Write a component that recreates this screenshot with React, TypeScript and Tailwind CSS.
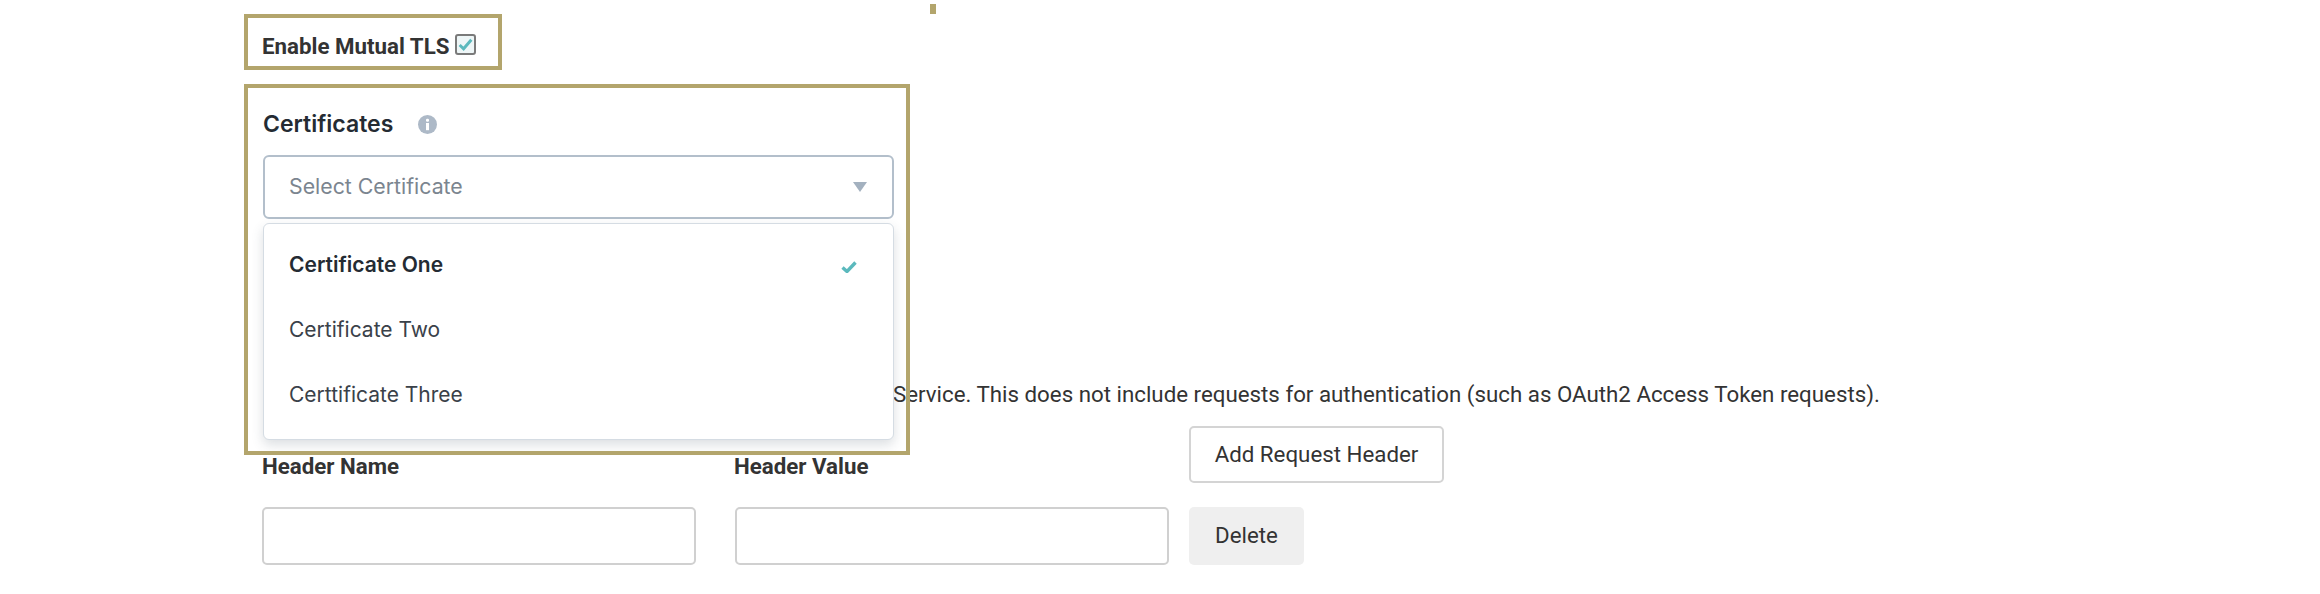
import React from 'react';

const roboto = "font-['Roboto',sans-serif]";
const inter = "font-['Inter',sans-serif]";

const certificates = [
  { name: 'Certificate One', selected: true },
  { name: 'Certificate Two', selected: false },
  { name: 'Certtificate Three', selected: false },
];

const App: React.FC = () => {
  return (
    <div className={`relative w-[2320px] h-[594px] bg-white overflow-hidden pl-[262px] ${roboto}`}>
      {/* Mutual TLS toggle */}
      <div className="flex items-center h-[32px] mt-[30px] text-[22.3px] leading-[32px] font-bold text-[#333333]">
        <span>Enable Mutual TLS</span>
        <span className="ml-[6px] -mt-[3px] w-[21px] h-[21px] rounded-[3px] border-2 border-[#7a7a7a] bg-[#eef6f7] flex items-center justify-center">
          <svg width="17" height="17" viewBox="0 0 16 16" fill="none">
            <path d="M2.5 8.5 L6.2 12 L13.5 3.5" stroke="#5bb9bd" strokeWidth="2.8" />
          </svg>
        </span>
      </div>

      {/* Certificates select */}
      <div className="relative z-10 w-[631px] ml-px">
        <div className={`flex items-center h-[32px] mt-[46px] ${inter}`}>
          <span className="text-[23px] font-semibold text-[#242b33]">Certificates</span>
          <svg className="ml-[25px]" width="19" height="19" viewBox="0 0 19 19">
            <circle cx="9.5" cy="9.5" r="9.5" fill="#adb9c7" />
            <rect x="8" y="3.8" width="3" height="3" rx="1.2" fill="#ffffff" />
            <rect x="8" y="8" width="3" height="7.2" fill="#ffffff" />
          </svg>
        </div>
        <div className={`mt-[15px] h-[64px] pl-[24px] pr-[25px] flex items-center justify-between rounded-[6px] border-2 border-[#b3bfcb] bg-white ${inter}`}>
          <span className="text-[21.3px] text-[#7b858f]">Select Certificate</span>
          <svg width="14" height="10" viewBox="0 0 14 10">
            <path d="M0 0 H14 L7 10 Z" fill="#a3b1bf" />
          </svg>
        </div>
        <ul className={`absolute top-full left-0 right-0 mt-[4px] pt-[8px] pb-[12px] rounded-[6px] border border-[#d5dce3] bg-white shadow-[0_5px_12px_rgba(60,75,95,0.18)] text-[21px] text-[#3a4149] ${inter}`}>
          {certificates.map(cert => (
            <li key={cert.name} className="h-[65px] px-[25px] flex items-center justify-between">
              <span className={cert.selected ? 'font-semibold text-[#242b33]' : ''}>{cert.name}</span>
              {cert.selected && (
                <svg className="mr-[11px] mt-[5px]" width="16" height="12" viewBox="0 0 16 12" fill="none">
                  <path d="M1.5 6.5 L6 10.5 L14.5 1.5" stroke="#5bb9bd" strokeWidth="3.4" />
                </svg>
              )}
            </li>
          ))}
        </ul>
      </div>

      {/* Request headers */}
      <p className="mt-[162px] ml-[2px] h-[26px] text-[22.3px] leading-[26px] text-[#333333] whitespace-nowrap">
        Add any custom headers that are sent with every request to the Service. This does not include requests for authentication (such as OAuth2 Access Token requests).
      </p>
      <div className="flex items-end mt-[19px]">
        <span className="w-[472px] mb-[3px] text-[22.3px] leading-[28px] font-bold text-[#333333]">Header Name</span>
        <span className="w-[455px] mb-[3px] text-[22.3px] leading-[28px] font-bold text-[#333333]">Header Value</span>
        <button className="h-[57px] w-[255px] rounded-[5px] border-2 border-[#d4d4d4] bg-white text-[22.3px] text-[#333333]">
          Add Request Header
        </button>
      </div>
      <div className="flex mt-[24px]">
        <div className="w-[473px]">
          <input className="block w-[434px] h-[58px] rounded-[5px] border-2 border-[#d0d0d0] bg-white" />
        </div>
        <div className="w-[454px]">
          <input className="block w-[434px] h-[58px] rounded-[5px] border-2 border-[#d0d0d0] bg-white" />
        </div>
        <button className="h-[58px] w-[115px] rounded-[5px] bg-[#efefef] text-[22.3px] text-[#333333]">Delete</button>
      </div>

      {/* Annotation outlines */}
      <div className="absolute z-20 left-[244px] top-[14px] w-[258px] h-[56px] border-[4px] border-[#b3a56c]" />
      <div className="absolute z-20 left-[244px] top-[84px] w-[666px] h-[371px] border-[4px] border-[#b3a56c]" />
      <div className="absolute z-20 left-[930px] top-[4px] w-[6px] h-[10px] bg-[#b3a56c]" />
    </div>
  );
};

export default App;
